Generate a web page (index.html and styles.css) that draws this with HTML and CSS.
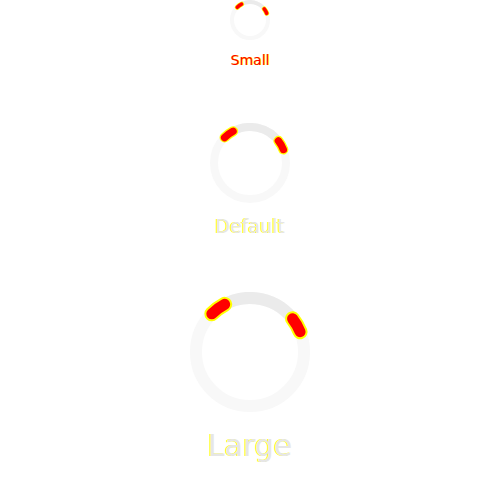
FILE: index.html
```html
<!DOCTYPE html>
<html lang="en">
<head>
  <meta charset="UTF-8">
  <title>Spinner sizes</title>
  <link rel="stylesheet" href="styles.css">
</head>
<body>
  <div class="spinner-list">
    <div class="spinner-item">
      <svg class="spinner spinner-small" viewBox="0 0 120 120">
        <circle class="track" cx="60" cy="60" r="54" />
        <path class="arc" d="M31.38 14.21 A54 54 0 0 1 104.77 29.80" />
        <path class="cap-edge" d="M21.82 21.82 A54 54 0 0 1 34.65 12.32" />
        <path class="cap-edge" d="M102.55 26.75 A54 54 0 0 1 110.07 39.77" />
        <path class="cap" d="M21.82 21.82 A54 54 0 0 1 34.65 12.32" />
        <path class="cap" d="M102.55 26.75 A54 54 0 0 1 110.07 39.77" />
      </svg>
      <span class="label label-small">Small</span>
    </div>

    <div class="spinner-item">
      <svg class="spinner spinner-default" viewBox="0 0 120 120">
        <circle class="track" cx="60" cy="60" r="54" />
        <path class="arc" d="M31.38 14.21 A54 54 0 0 1 104.77 29.80" />
        <path class="cap-edge" d="M21.82 21.82 A54 54 0 0 1 34.65 12.32" />
        <path class="cap-edge" d="M102.55 26.75 A54 54 0 0 1 110.07 39.77" />
        <path class="cap" d="M21.82 21.82 A54 54 0 0 1 34.65 12.32" />
        <path class="cap" d="M102.55 26.75 A54 54 0 0 1 110.07 39.77" />
      </svg>
      <span class="label label-default">Default</span>
    </div>

    <div class="spinner-item">
      <svg class="spinner spinner-large" viewBox="0 0 120 120">
        <circle class="track" cx="60" cy="60" r="54" />
        <path class="arc" d="M31.38 14.21 A54 54 0 0 1 104.77 29.80" />
        <path class="cap-edge" d="M21.82 21.82 A54 54 0 0 1 34.65 12.32" />
        <path class="cap-edge" d="M102.55 26.75 A54 54 0 0 1 110.07 39.77" />
        <path class="cap" d="M21.82 21.82 A54 54 0 0 1 34.65 12.32" />
        <path class="cap" d="M102.55 26.75 A54 54 0 0 1 110.07 39.77" />
      </svg>
      <span class="label label-large">Large</span>
    </div>
  </div>
</body>
</html>
```

FILE: styles.css
```css
body {
  margin: 0;
  background: #ffffff;
  font-family: "DejaVu Sans", sans-serif;
}
.spinner-list {
  display: flex;
  flex-direction: column;
  align-items: center;
  gap: 55px;
  padding-top: 1px;
}
.spinner-item {
  display: flex;
  flex-direction: column;
  align-items: center;
  gap: 12px;
}
.spinner {
  display: block;
}
.spinner-small {
  width: 40px;
  height: 40px;
  margin-top: -1px;
}
.spinner-default {
  width: 80px;
  height: 80px;
}
.spinner-large {
  width: 120px;
  height: 120px;
}
.track {
  fill: none;
  stroke: #f8f8f8;
  stroke-width: 12;
}
.arc {
  fill: none;
  stroke: #ebebeb;
  stroke-width: 12;
}
.cap-edge {
  fill: none;
  stroke: #ffff00;
  stroke-width: 15;
  stroke-linecap: round;
}
.cap {
  fill: none;
  stroke: #ff0000;
  stroke-width: 11;
  stroke-linecap: round;
}
.label {
  line-height: normal;
}
.label-small {
  font-size: 14px;
  color: #ff0000;
  text-shadow: 1px 0 #ffff00;
}
.label-default {
  font-size: 19px;
  color: #e6e6e6;
  text-shadow: -1px 0 #ffff00;
}
.label-large {
  margin-top: 4px;
  font-size: 30px;
  color: #e6e6e6;
  text-shadow: -1px 0 #ffff00;
}
```
